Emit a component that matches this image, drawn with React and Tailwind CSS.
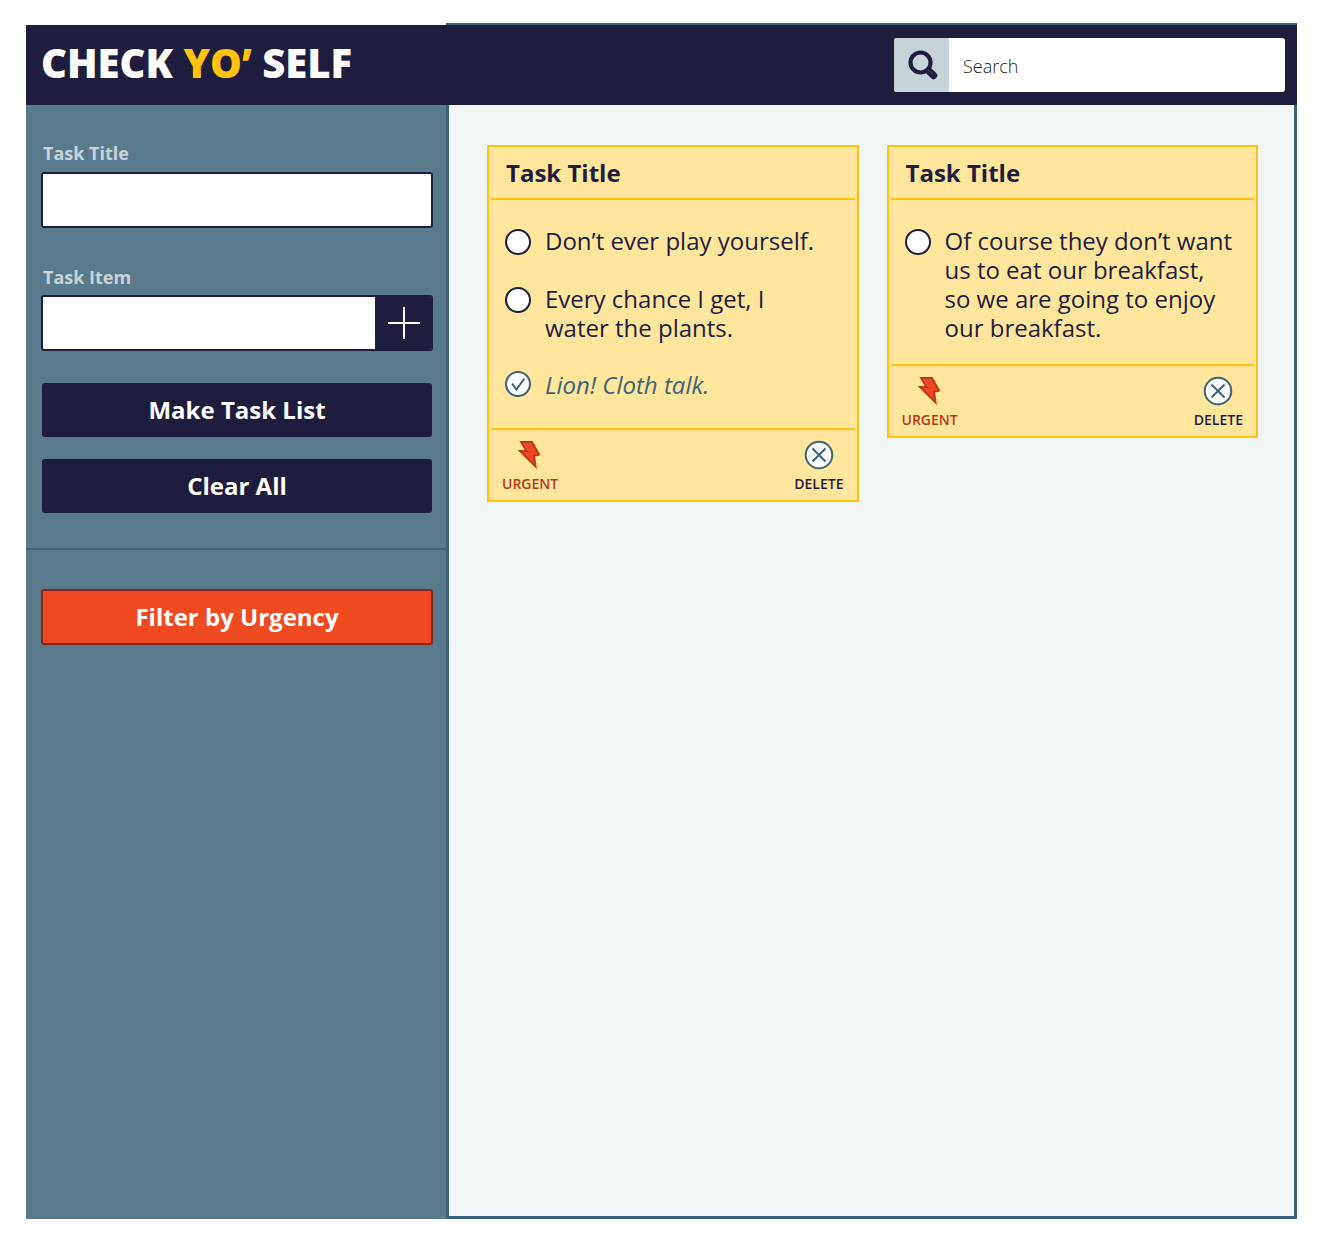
import React, { useState } from "react";

function SearchIcon() {
  return (
    <svg width="32" height="32" viewBox="0 0 32 32" fill="none" aria-hidden="true">
      <circle cx="14.5" cy="13.5" r="10" stroke="#1f1d3d" strokeWidth="4.2" />
      <path d="M23 22 27.5 26.5" stroke="#1f1d3d" strokeWidth="7.4" strokeLinecap="round" />
      <path d="M21 19.5 26.5 25" stroke="#56546d" strokeWidth="0.8" />
    </svg>
  );
}

function PlusIcon() {
  return (
    <svg width="34" height="34" viewBox="0 0 34 34" fill="none" aria-hidden="true">
      <path d="M17 1v32M1 17h32" stroke="#fff" strokeWidth="2" />
    </svg>
  );
}

function BoltIcon() {
  return (
    <svg width="28" height="30" viewBox="0 0 28 30" aria-hidden="true">
      <path
        d="M5 2H16L23 14.5 18 15.7 19.5 26.5 4 11H10.6Z"
        fill="#f04a23"
        stroke="#b63a20"
        strokeWidth="2"
      />
    </svg>
  );
}

function DeleteIcon() {
  return (
    <svg width="30" height="30" viewBox="0 0 30 30" fill="none" aria-hidden="true">
      <circle cx="15" cy="15" r="13.3" fill="#fff" stroke="#3d6476" strokeWidth="2" />
      <path d="M8.5 8.5 21.5 21.5M21.5 8.5 8.5 21.5" stroke="#3d6476" strokeWidth="2" />
    </svg>
  );
}

function CheckIcon() {
  return (
    <svg
      className="pointer-events-none absolute inset-0"
      width="26"
      height="26"
      viewBox="0 0 26 26"
      fill="none"
      aria-hidden="true"
    >
      <path d="M7 12.5 11.3 18.5 19.5 7.5" stroke="#3d6476" strokeWidth="2" />
    </svg>
  );
}

function Task({ id, text, initial }) {
  const [done, setDone] = useState(initial);
  return (
    <li className={done ? "flex gap-3.5 pb-2" : "flex gap-3.5"}>
      <span className={done ? "relative size-[26px] shrink-0" : "relative mt-[3px] size-[26px] shrink-0"}>
        <input
          id={id}
          type="checkbox"
          checked={done}
          onChange={() => setDone(!done)}
          className="block size-[26px] appearance-none rounded-full border-2 border-[#1f1d3d] bg-white checked:border-[#3d6476]"
        />
        {done && <CheckIcon />}
      </span>
      <label
        htmlFor={id}
        className={
          done
            ? "text-2xl leading-[27px] whitespace-pre-line text-[#3d6476] italic"
            : "text-2xl leading-[29px] whitespace-pre-line"
        }
      >
        {text}
      </label>
    </li>
  );
}

function Card({ id, title, tasks }) {
  return (
    <article className="border-2 border-[#ffc20e] bg-[#ffe69c] text-[#1f1d3d]">
      <h2 className="mx-0.5 border-b-2 border-[#ffc20e] px-[15px] py-[9px] text-2xl leading-[33px] font-bold">
        {title}
      </h2>
      <ul className="flex flex-col gap-[29px] px-4 pt-[26px] pb-[22px]">
        {tasks.map((t, i) => (
          <Task key={i} id={id + "-" + i} text={t.text} initial={t.done} />
        ))}
      </ul>
      <footer className="mx-0.5 flex justify-between border-t-2 border-[#ffc20e] px-[11px] pt-2.5 pb-1.5 text-sm leading-5 font-semibold">
        <button type="button" className="flex flex-col items-center gap-1 text-[#b63a20]">
          <BoltIcon />
          URGENT
        </button>
        <button type="button" className="flex flex-col items-center gap-1">
          <DeleteIcon />
          DELETE
        </button>
      </footer>
    </article>
  );
}

const cards = [
  {
    id: "first",
    title: "Task Title",
    tasks: [
      { text: "Don’t ever play yourself.", done: false },
      { text: "Every chance I get, I\nwater the plants.", done: false },
      { text: "Lion! Cloth talk.", done: true },
    ],
  },
  {
    id: "second",
    title: "Task Title",
    tasks: [
      {
        text: "Of course they don’t want\nus to eat our breakfast,\nso we are going to enjoy\nour breakfast.",
        done: false,
      },
    ],
  },
];

export default function App() {
  return (
    <div className="flex min-h-screen flex-col bg-white pt-[23px] pr-[29px] pb-[22px] pl-[26px] font-['Open_Sans',sans-serif]">
      <header className="grid grid-cols-[420px_1fr]">
        <div className="mt-0.5 flex items-center bg-[#1f1d3d] pl-[15px]">
          <h1 className="pb-1 text-[40px] leading-[56px] font-extrabold whitespace-nowrap text-white">
            CHECK <span className="text-[#ffc20e]">YO’</span> SELF
          </h1>
        </div>
        <div className="flex justify-end border-t-2 border-[#3d6476] bg-[#1f1d3d] py-[13px] pr-3">
          <form
            role="search"
            onSubmit={(e) => e.preventDefault()}
            className="flex h-[54px] w-[391px] overflow-hidden rounded-[3px] bg-white"
          >
            <button
              type="submit"
              aria-label="Search"
              className="flex w-[55px] items-center justify-center bg-[#c8d3d9]"
            >
              <SearchIcon />
            </button>
            <input
              type="search"
              aria-label="Search tasks"
              placeholder="Search"
              className="min-w-0 flex-1 px-3.5 pt-0.5 text-lg font-light text-[#1b1b1b] outline-none placeholder:text-[#1b1b1b]"
            />
          </form>
        </div>
      </header>
      <div className="grid flex-1 grid-cols-[420px_1fr]">
        <aside className="bg-[#5a7a8b]">
          <form
            onSubmit={(e) => e.preventDefault()}
            className="flex flex-col border-b-2 border-[#3d6476] pt-9 pr-[13px] pb-[35px] pl-[15px]"
          >
            <label htmlFor="task-title" className="px-0.5 text-lg leading-6 font-bold text-[#c8d3d9]">
              Task Title
            </label>
            <input
              id="task-title"
              type="text"
              className="mt-[7px] h-14 rounded-[3px] border-2 border-[#1f1d3d] bg-white px-3 text-lg outline-none"
            />
            <label htmlFor="task-item" className="mt-[37px] px-0.5 text-lg leading-6 font-bold text-[#c8d3d9]">
              Task Item
            </label>
            <div className="mt-[6px] flex h-14 overflow-hidden rounded-[3px] border-2 border-[#1f1d3d] bg-white">
              <input
                id="task-item"
                type="text"
                className="min-w-0 flex-1 px-3 text-lg outline-none"
              />
              <button
                type="button"
                aria-label="Add task item"
                className="flex w-14 items-center justify-center bg-[#1f1d3d] pl-0.5"
              >
                <PlusIcon />
              </button>
            </div>
            <button
              type="submit"
              className="mx-px mt-8 h-[54px] rounded-[3px] bg-[#1f1d3d] text-2xl font-bold text-white"
            >
              Make Task List
            </button>
            <button
              type="reset"
              className="mx-px mt-[22px] h-[54px] rounded-[3px] bg-[#1f1d3d] text-2xl font-bold text-white"
            >
              Clear All
            </button>
          </form>
          <div className="flex pt-[39px] pr-[13px] pl-[15px]">
            <button
              type="button"
              className="h-14 flex-1 rounded-[3px] border-2 border-[#7d2a1c] bg-[#f04a23] text-2xl font-bold text-white"
            >
              Filter by Urgency
            </button>
          </div>
        </aside>
        <main className="grid grid-cols-2 content-start items-start gap-7 border-x-3 border-b-3 border-[#3d6476] bg-[#f2f6f7] pt-10 pr-9 pl-[38px]">
          {cards.map((c) => (
            <Card key={c.id} {...c} />
          ))}
        </main>
      </div>
    </div>
  );
}
